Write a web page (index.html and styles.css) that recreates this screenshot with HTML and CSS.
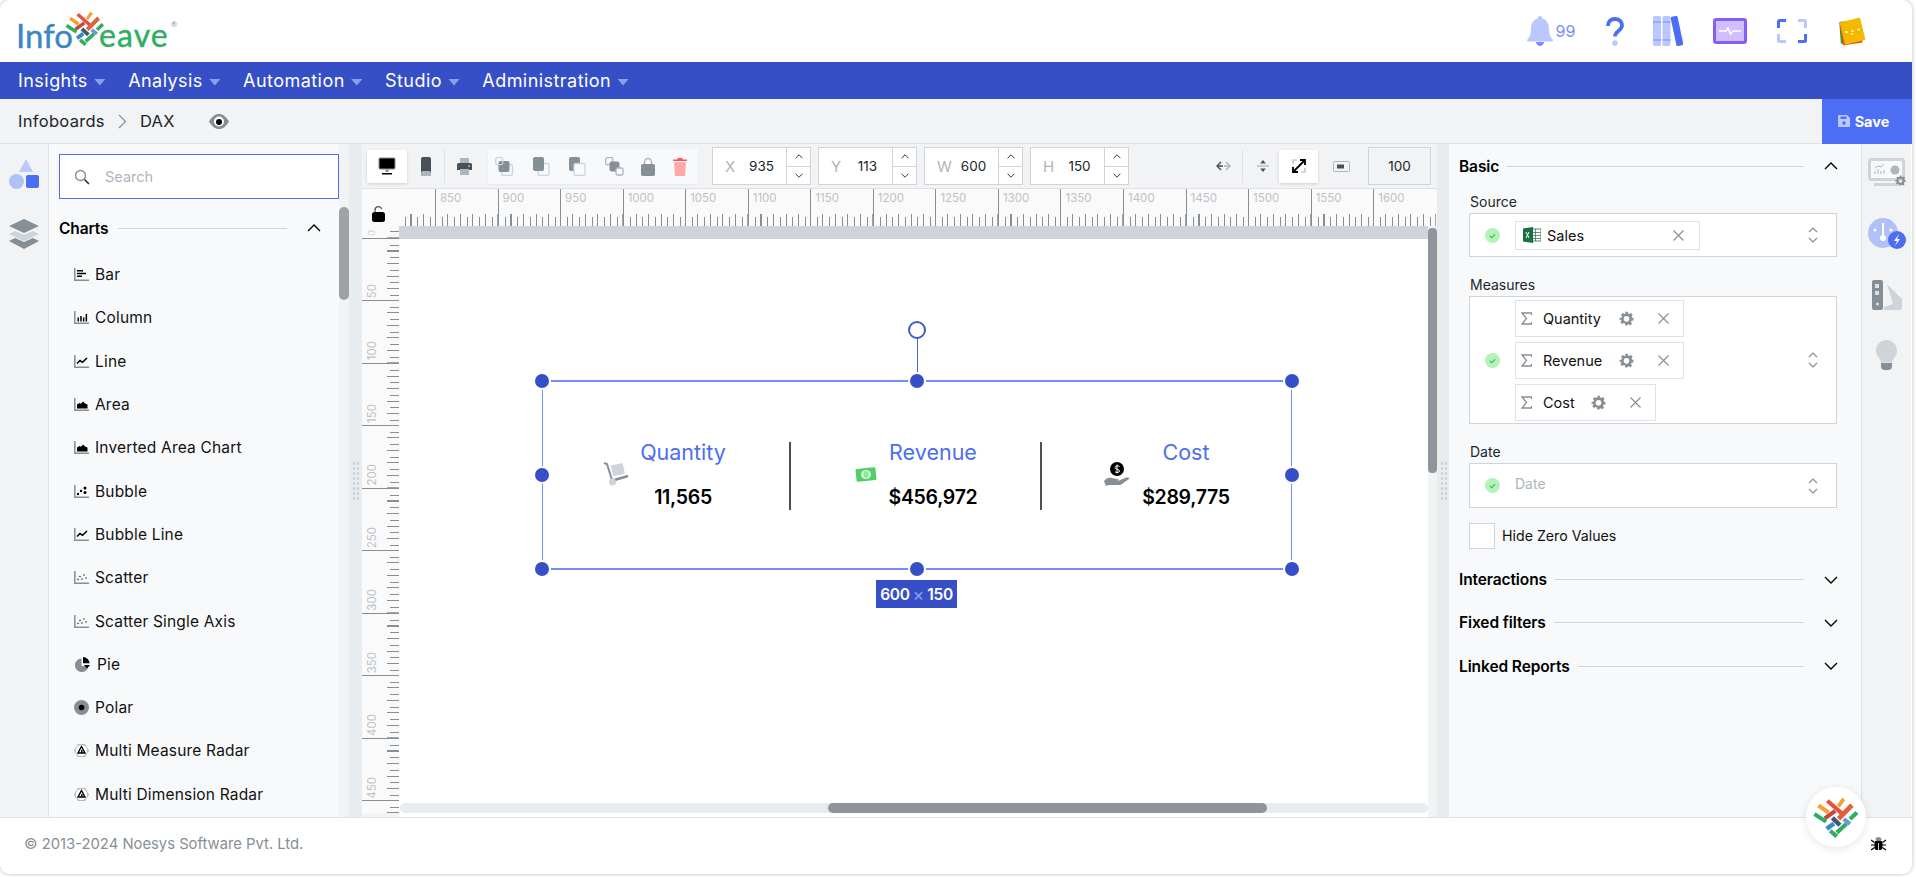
FILE: index.html
```html
<!DOCTYPE html>
<html lang="en">
<head>
<meta charset="utf-8">
<title>Infoweave - DAX</title>
<link rel="stylesheet" href="styles.css">
</head>
<body>
<svg class="defs" width="0" height="0" aria-hidden="true">
  <defs>
    <symbol id="weave" viewBox="335 112 145 130">
      <g fill="none" stroke-width="13">
        <path d="M380 124L426 164" stroke="#e8503f"/>
        <path d="M415 142L432 118" stroke="#f5a030" stroke-width="12"/>
        <path d="M352 139L384 161" stroke="#f5a030"/>
        <path d="M372 180L405 156" stroke="#c9453a"/>
        <path d="M416 181L458 138" stroke="#e0613a" stroke-width="15"/>
        <path d="M396 178L420 201" stroke="#3f5a70" stroke-width="14"/>
        <path d="M378 213L401 196" stroke="#3d86c6" stroke-width="14"/>
        <path d="M432 182L452 197" stroke="#6699d8"/>
        <path d="M339 166L376 190" stroke="#2fae62"/>
        <path d="M389 219L410 237M410 225L441 197M452 182L474 161" stroke="#2fae62"/>
      </g>
    </symbol>
    <symbol id="chev-up" viewBox="0 0 14 8"><path d="M1 7L7 1l6 6" fill="none" stroke="#000" stroke-width="1.400"/></symbol>
    <symbol id="chev-down" viewBox="0 0 14 8"><path d="M1 1l6 6 6-6" fill="none" stroke="#000" stroke-width="1.400"/></symbol>
    <symbol id="updown" viewBox="0 0 10 16"><path d="M1 5l4-4 4 4M1 11l4 4 4-4" fill="none" stroke="#868e96" stroke-width="1.200"/></symbol>
    <symbol id="check" viewBox="0 0 15 15"><circle cx="7.500" cy="7.500" r="7.500" fill="#b2f2bb"/><path d="M4.800 7.800l2 1.800 3.400-3.400" fill="none" stroke="#40c057" stroke-width="1.200"/></symbol>
    <symbol id="close" viewBox="0 0 11 11"><path d="M.5.500l10 10M10.500.5l-10 10" fill="none" stroke="#868e96" stroke-width="1.100"/></symbol>
    <symbol id="sigma" viewBox="0 0 11 13"><path d="M10.500 3V1H1l4.500 5.500L1 12h9.500v-2" fill="none" stroke="#868e96" stroke-width="1.300"/></symbol>
    <symbol id="gear" viewBox="0 0 24 24"><path fill="#868e96" fill-rule="evenodd" d="M10 1h4l.6 3.100 1.900.8 2.600-1.800 2.800 2.800-1.800 2.600.8 1.900L23 11v4l-3.100.6-.8 1.900 1.800 2.600-2.800 2.800-2.600-1.800-1.900.8L13 23h-3l-.6-3.100-1.900-.8-2.600 1.800-2.800-2.800 1.800-2.600-.8-1.900L1 15v-4l3.100-.6.8-1.900-1.800-2.600 2.800-2.800 2.600 1.800 1.900-.8zM12 8a4.500 4.500 0 1 0 0 9 4.500 4.500 0 0 0 0-9z"/></symbol>
    <symbol id="axis" viewBox="0 0 15 13"><path d="M.8 0v12.200H15" fill="none" stroke="#868e96" stroke-width="1.500"/></symbol>
    <symbol id="c-bar" viewBox="0 0 15 13"><use href="#axis"/><path d="M3 2h6v1.500H3zM3 4.700h9v1.500H3zM3 7.400h5v1.500H3z"/></symbol>
    <symbol id="c-col" viewBox="0 0 15 13"><use href="#axis"/><path d="M3.500 6.500H5v4H3.500zM6.200 5H7.700v5.500H6.200zM8.900 6.500h1.500v4H8.900zM11.600 3h1.500v7.500h-1.500z"/></symbol>
    <symbol id="c-line" viewBox="0 0 15 13"><use href="#axis"/><path d="M3 8.500l3-3 2.500 1.800L13 3" fill="none" stroke="#000" stroke-width="1.600"/></symbol>
    <symbol id="c-area" viewBox="0 0 15 13"><use href="#axis"/><path d="M3 10.500V6.500l2.500-1.500 1.500.8L9 3.500l2 2 2.500 1v4z"/></symbol>
    <symbol id="c-bubble" viewBox="0 0 15 13"><use href="#axis"/><circle cx="4" cy="9" r="1.200"/><circle cx="7" cy="6" r="1.200"/><circle cx="11" cy="3" r="1.500"/><circle cx="11" cy="7.500" r="1.500"/></symbol>
    <symbol id="c-scatter" viewBox="0 0 15 13"><use href="#axis"/><circle cx="4" cy="8.500" r=".7"/><circle cx="6" cy="5.500" r=".7"/><circle cx="8" cy="8" r=".7"/><circle cx="10" cy="4" r=".7"/><circle cx="12" cy="7" r=".7"/></symbol>
    <symbol id="c-pie" viewBox="0 0 16 15"><path d="M7 1.500A6.800 6.800 0 1 0 14 9H7z" fill="#868e96"/><path d="M8.500 0a6.800 6.800 0 0 1 6.600 6.200H8.500zM9.500 8h6l-3 3.500z"/></symbol>
    <symbol id="c-polar" viewBox="0 0 15 15"><circle cx="7.500" cy="7.500" r="7.500" fill="#868e96"/><circle cx="7.500" cy="7.500" r="2.800"/></symbol>
    <symbol id="c-radar" viewBox="0 0 15 15"><path d="M4 1h7l4 6.500L11 14H4L0 7.500z" fill="#adb5bd"/><circle cx="7.500" cy="7.500" r="5.800" fill="#fff"/><path d="M7.500 3.500L11 10H4z" fill="none" stroke="#000" stroke-width="1.400"/><path d="M7 7h1.500v3H7z"/></symbol>
    <symbol id="o1" viewBox="0 0 19 19"><rect x="6.500" y="7.500" width="11" height="11" rx="2" fill="none" stroke="#ced4da" stroke-width="1.300"/><rect x="3.500" y="4" width="11" height="11" rx="2" fill="#868e96"/><rect x=".7" y=".7" width="7" height="7" rx="1.500" fill="none" stroke="#ced4da" stroke-width="1.300"/></symbol>
    <symbol id="o2" viewBox="0 0 19 19"><rect x="6" y="6.500" width="11" height="12" rx="2" fill="none" stroke="#ced4da" stroke-width="1.300"/><rect x="1" y="0" width="11" height="14" rx="2" fill="#868e96"/></symbol>
    <symbol id="o3" viewBox="0 0 19 19"><rect x="1" y="0" width="11" height="14" rx="2" fill="#868e96"/><rect x="6" y="6.500" width="11" height="12" rx="2" fill="#f8f9fa" stroke="#ced4da" stroke-width="1.300"/></symbol>
    <symbol id="o4" viewBox="0 0 19 19"><rect x=".7" y=".7" width="7" height="7" rx="1.500" fill="none" stroke="#adb5bd" stroke-width="1.300"/><rect x="4.500" y="4.500" width="10" height="10" rx="2" fill="#868e96"/><rect x="11" y="11" width="7" height="7" rx="1.500" fill="#f8f9fa" stroke="#adb5bd" stroke-width="1.300"/></symbol>
  </defs>
</svg>

<div class="app">
  <header class="topbar">
    <div class="logo">
      <span class="logo-info">Info</span>
      <svg class="logo-mark" width="40" height="35"><use href="#weave"/></svg>
      <span class="logo-eave">eave</span>
      <span class="logo-reg">®</span>
    </div>
    <div class="top-icons">
      <div class="bell">
        <svg width="26" height="30" viewBox="0 0 26 30"><path fill="#bac8ff" d="M13 0c1.500 0 2.500 1 2.500 2.500C20 4 22 8 22 13c0 5 1 8 4 11 0 1-.5 1.500-1.500 1.500h-23C.5 25.500 0 25 0 24c3-3 4-6 4-11C4 8 6 4 10.500 2.500 10.500 1 11.500 0 13 0z"/><path fill="#748ffc" d="M9 26h8c0 2-2 4-4 4s-4-2-4-4z"/></svg>
        <span class="bell-count">99</span>
      </div>
      <svg class="ti-help" width="18" height="29" viewBox="0 0 18 29"><path d="M2 9C2 4 5 2 9 2s7 2.500 7 6.500c0 5-7 5.500-7 11" fill="none" stroke="#4c6ef5" stroke-width="3.800"/><circle cx="9" cy="26" r="2.800" fill="#bac8ff"/></svg>
      <svg class="ti-books" width="30" height="30" viewBox="0 0 30 30"><rect x="0" y="0" width="8" height="30" rx="1.500" fill="#bac8ff"/><rect x="9.500" y="0" width="8" height="30" rx="1.500" fill="#bac8ff"/><path d="M0 6h8M0 24h8M9.500 6h8M9.500 24h8" stroke="#748ffc" stroke-width="1"/><rect x="20.500" y="0" width="7" height="30" rx="1.500" fill="#4c6ef5" transform="rotate(-12 24 15)"/></svg>
      <svg class="ti-monitor" width="34" height="26" viewBox="0 0 34 26"><rect x="1.500" y="1.500" width="31" height="23" rx="1.500" fill="#d0bfff" stroke="#845ef7" stroke-width="3"/><path d="M6 13h7l2-3 2.500 6 2.500-3h8" fill="none" stroke="#fff" stroke-width="1.500"/></svg>
      <svg class="ti-frame" width="30" height="24" viewBox="0 0 30 24"><path d="M1.500 9V2.500a1 1 0 0 1 1-1H9" fill="none" stroke="#4c6ef5" stroke-width="3"/><path d="M21 1.500h6.500a1 1 0 0 1 1 1V9" fill="none" stroke="#bac8ff" stroke-width="3"/><path d="M1.500 15v6.500a1 1 0 0 0 1 1H9" fill="none" stroke="#bac8ff" stroke-width="3"/><path d="M28.500 15v6.500a1 1 0 0 1-1 1H21" fill="none" stroke="#4c6ef5" stroke-width="3"/></svg>
      <svg class="ti-note" width="28" height="30" viewBox="0 0 28 30"><rect x="2" y="5" width="20" height="22" rx="1" fill="#2f9e44" transform="rotate(-4 13 16)"/><rect x="3" y="6" width="20" height="22" rx="1" fill="#e8590c" transform="rotate(-8 13 16)"/><rect x="4" y="3.500" width="21" height="23" rx="1" fill="#f5b800" transform="rotate(-14 15 15)"/><path d="M7 16h3M13 15h3M19 13.500h3M13 18h2" stroke="#fff3bf" stroke-width="1.600"/></svg>
    </div>
  </header>

  <nav class="mainnav">
    <span class="nav-item">Insights<i class="caret"></i></span>
    <span class="nav-item">Analysis<i class="caret"></i></span>
    <span class="nav-item">Automation<i class="caret"></i></span>
    <span class="nav-item">Studio<i class="caret"></i></span>
    <span class="nav-item">Administration<i class="caret"></i></span>
  </nav>

  <div class="crumbs">
    <span>Infoboards</span>
    <svg class="crumb-sep" width="9" height="15" viewBox="0 0 9 15"><path d="M1 1l6.500 6.500L1 14" fill="none" stroke="#868e96" stroke-width="1.100"/></svg>
    <span>DAX</span>
    <svg class="crumb-eye" width="20" height="15" viewBox="0 0 20 15"><path d="M0 7.500C3 2.500 6 0 10 0s7 2.500 10 7.500C17 12.500 14 15 10 15S3 12.500 0 7.500z" fill="#868e96"/><circle cx="10" cy="7.500" r="5" fill="#fff"/><circle cx="10" cy="8" r="3"/></svg>
    <button class="save" type="button">
      <svg width="12" height="12" viewBox="0 0 12 12"><path d="M1 0h8l3 3v8a1 1 0 0 1-1 1H1a1 1 0 0 1-1-1V1a1 1 0 0 1 1-1z" fill="#bac8ff"/><rect x="2.500" y="1.500" width="6" height="2.500" fill="#4c6ef5"/><circle cx="6" cy="8" r="1.800" fill="#4c6ef5"/></svg>
      Save
    </button>
  </div>

  <main class="workspace">
    <aside class="rail">
      <svg class="rail-shapes" width="30" height="30" viewBox="0 0 30 30"><path d="M17 0l7 13H10z" fill="#bac8ff"/><circle cx="7.500" cy="22.500" r="7.500" fill="#b1c1f7"/><rect x="17" y="16" width="13" height="13" rx="2" fill="#4c6ef5"/></svg>
      <svg class="rail-layers" width="30" height="30" viewBox="0 0 30 30"><path d="M0 22l6-3 9 4 9-4 6 3-15 8z" fill="#868e96"/><path d="M0 15l6-3 9 4 9-4 6 3-15 7z" fill="#ced4da"/><path d="M15 0l15 7-15 7L0 7z" fill="#868e96"/></svg>
    </aside>

    <section class="library">
      <div class="library-body">
        <div class="search">
          <svg width="16" height="16" viewBox="0 0 16 16"><circle cx="6.500" cy="6.500" r="5" fill="none" stroke="#868e96" stroke-width="1.400"/><path d="M10.500 10.500L15 15" stroke="#212529" stroke-width="1.500"/></svg>
          <span>Search</span>
        </div>
        <div class="section-head lib-head">
          <span class="section-title">Charts</span>
          <span class="section-line"></span>
          <svg width="14" height="8"><use href="#chev-up"/></svg>
        </div>
        <ul class="chart-list">
          <li><svg width="15" height="13"><use href="#c-bar"/></svg>Bar</li>
          <li><svg width="15" height="13"><use href="#c-col"/></svg>Column</li>
          <li><svg width="15" height="13"><use href="#c-line"/></svg>Line</li>
          <li><svg width="15" height="13"><use href="#c-area"/></svg>Area</li>
          <li><svg width="15" height="13"><use href="#c-area"/></svg>Inverted Area Chart</li>
          <li><svg width="15" height="13"><use href="#c-bubble"/></svg>Bubble</li>
          <li><svg width="15" height="13"><use href="#c-line"/></svg>Bubble Line</li>
          <li><svg width="15" height="13"><use href="#c-scatter"/></svg>Scatter</li>
          <li><svg width="15" height="13"><use href="#c-scatter"/></svg>Scatter Single Axis</li>
          <li class="pie"><svg width="17" height="15"><use href="#c-pie"/></svg>Pie</li>
          <li><svg width="15" height="15"><use href="#c-polar"/></svg>Polar</li>
          <li><svg width="15" height="15"><use href="#c-radar"/></svg>Multi Measure Radar</li>
          <li><svg width="15" height="15"><use href="#c-radar"/></svg>Multi Dimension Radar</li>
        </ul>
      </div>
      <div class="track"><div class="thumb"></div></div>
    </section>

    <div class="gutter"><span class="dots"></span></div>

    <section class="editor">
      <div class="toolbar">
        <div class="tool-card">
          <svg width="18" height="18" viewBox="0 0 18 18"><rect x="1" y="1" width="16" height="11" rx="1" fill="#000" stroke="#868e96"/><path d="M7.500 12.500h3V15h-3z" fill="#868e96"/><path d="M4 16h10v1.500H4z"/></svg>
        </div>
        <svg class="tool-phone" width="10" height="19" viewBox="0 0 10 19"><rect width="10" height="19" rx="2" fill="#495057"/><rect y="14" width="10" height="5" rx="2" fill="#adb5bd"/></svg>
        <span class="tool-sep"></span>
        <svg class="tool-print" width="15" height="17" viewBox="0 0 15 17"><path d="M3 0h9v5H3z" fill="#adb5bd"/><path d="M1.500 5h12A1.500 1.500 0 0 1 15 6.500V12H0V6.500A1.500 1.500 0 0 1 1.500 5z" fill="#495057"/><path d="M3 11h9v6H3z" fill="#adb5bd"/><circle cx="12" cy="8" r=".8" fill="#fff"/></svg>
        <div class="tool-group">
          <svg width="19" height="19"><use href="#o1"/></svg>
          <svg width="19" height="19"><use href="#o2"/></svg>
          <svg width="19" height="19"><use href="#o3"/></svg>
          <svg width="19" height="19"><use href="#o4"/></svg>
          <svg width="14" height="19" viewBox="0 0 14 19"><path d="M3.500 8V5a3.500 3.500 0 0 1 7 0v3" fill="none" stroke="#adb5bd" stroke-width="1.400"/><rect y="7" width="14" height="12" rx="2" fill="#868e96"/></svg>
          <svg width="14" height="19" viewBox="0 0 14 19"><path d="M0 2.500h14V4H0zM4.500 1h5v1.500h-5z" fill="#fa5252"/><path d="M1 5h12l-1 14H2z" fill="#ffa8a8"/></svg>
        </div>
        <div class="num-fields">
          <div class="num"><span class="num-key">X</span><span class="num-val">935</span><span class="spin"><i><svg width="8" height="5"><use href="#chev-up"/></svg></i><i><svg width="8" height="5"><use href="#chev-down"/></svg></i></span></div>
          <div class="num"><span class="num-key">Y</span><span class="num-val">113</span><span class="spin"><i><svg width="8" height="5"><use href="#chev-up"/></svg></i><i><svg width="8" height="5"><use href="#chev-down"/></svg></i></span></div>
          <div class="num"><span class="num-key">W</span><span class="num-val">600</span><span class="spin"><i><svg width="8" height="5"><use href="#chev-up"/></svg></i><i><svg width="8" height="5"><use href="#chev-down"/></svg></i></span></div>
          <div class="num"><span class="num-key">H</span><span class="num-val">150</span><span class="spin"><i><svg width="8" height="5"><use href="#chev-up"/></svg></i><i><svg width="8" height="5"><use href="#chev-down"/></svg></i></span></div>
        </div>
        <svg class="tool-fitw" width="15" height="10" viewBox="0 0 15 10"><path d="M5 1L1 5l4 4M1 5h6" fill="none" stroke="#495057" stroke-width="1.400"/><path d="M10 1l4 4-4 4M14 5H8" fill="none" stroke="#adb5bd" stroke-width="1.400"/></svg>
        <span class="tool-sep sep-b"></span>
        <svg class="tool-fith" width="12" height="14" viewBox="0 0 12 14"><path d="M0 7h12" stroke="#adb5bd" stroke-width="1.200"/><path d="M6 1l2.800 3.500H3.200zM6 13l2.800-3.500H3.200z" fill="#495057"/></svg>
        <div class="tool-card card-b">
          <svg width="14" height="14" viewBox="0 0 14 14"><path d="M8 1h5v5M13 1L1 13M1 8v5h5" fill="none" stroke="#000" stroke-width="1.800"/><path d="M1 5V1h4M13 9v4H9" fill="none" stroke="#adb5bd" stroke-width="1.200"/></svg>
        </div>
        <svg class="tool-label" width="17" height="11" viewBox="0 0 17 11"><rect x=".5" y=".5" width="16" height="10" rx="1" fill="#f1f3f5" stroke="#adb5bd"/><rect x="4" y="3.500" width="7" height="4" fill="#495057"/></svg>
        <div class="zoom-box">100</div>
      </div>

      <div class="ruler-top">
        <div class="ruler-corner">
          <svg width="13" height="16" viewBox="0 0 13 16"><path d="M3 7V4a3.500 3.500 0 0 1 6.800-1" fill="none" stroke="#495057" stroke-width="1.200"/><rect y="6" width="13" height="10" rx="2.500"/></svg>
        </div>
        <div class="rt-lead"></div>
        <div class="rt-cell">850</div><div class="rt-cell">900</div><div class="rt-cell">950</div><div class="rt-cell">1000</div>
        <div class="rt-cell">1050</div><div class="rt-cell">1100</div><div class="rt-cell">1150</div><div class="rt-cell">1200</div>
        <div class="rt-cell">1250</div><div class="rt-cell">1300</div><div class="rt-cell">1350</div><div class="rt-cell">1400</div>
        <div class="rt-cell">1450</div><div class="rt-cell">1500</div><div class="rt-cell">1550</div><div class="rt-cell">1600</div>
      </div>

      <div class="editor-body">
        <div class="ruler-left">
          <div class="rl-cell rl-first"><span>0</span></div>
          <div class="rl-cell"><span>50</span></div>
          <div class="rl-cell"><span>100</span></div>
          <div class="rl-cell"><span>150</span></div>
          <div class="rl-cell"><span>200</span></div>
          <div class="rl-cell"><span>250</span></div>
          <div class="rl-cell"><span>300</span></div>
          <div class="rl-cell"><span>350</span></div>
          <div class="rl-cell"><span>400</span></div>
          <div class="rl-cell"><span>450</span></div>
          <div class="rl-cell"><span></span></div>
        </div>
        <div class="stage">
          <div class="stage-strip"></div>
          <div class="widget">
            <span class="rotate-line"></span>
            <span class="rotate-knob"></span>
            <span class="handle h-tl"></span><span class="handle h-tc"></span><span class="handle h-tr"></span>
            <span class="handle h-ml"></span><span class="handle h-mr"></span>
            <span class="handle h-bl"></span><span class="handle h-bc"></span><span class="handle h-br"></span>
            <span class="size-tag">600 <em>×</em> 150</span>

            <div class="kpi kpi-a">
              <svg class="kpi-icon" width="26" height="24" viewBox="0 0 26 24"><path d="M1 1l3 1 5 16" fill="none" stroke="#868e96" stroke-width="2"/><rect x="9" y="2" width="12" height="11" fill="#ced4da" transform="rotate(-12 15 8)"/><path d="M8 19l17-5" stroke="#868e96" stroke-width="2.500"/><circle cx="9.500" cy="20" r="3.500" fill="#ced4da"/></svg>
              <div class="kpi-text"><span class="kpi-label">Quantity</span><strong class="kpi-value">11,565</strong></div>
            </div>
            <div class="kpi kpi-b">
              <svg class="kpi-icon" width="22" height="17" viewBox="0 0 22 17"><rect x="1" y="2" width="20" height="13" rx="1.500" fill="#51cf66" transform="rotate(-6 11 8.500)"/><ellipse cx="11" cy="8.500" rx="5" ry="4.500" fill="#d3f9d8"/><ellipse cx="11" cy="8.500" rx="2.500" ry="3.500" fill="#8ce99a"/></svg>
              <div class="kpi-text"><span class="kpi-label">Revenue</span><strong class="kpi-value">$456,972</strong></div>
            </div>
            <div class="kpi kpi-c">
              <svg class="kpi-icon" width="26" height="24" viewBox="0 0 26 24"><circle cx="13" cy="7" r="7"/><path d="M15.500 4.500C14.500 3.700 11 3.500 11 5.500s4.500 1.500 4.500 3.500-3.500 1.700-4.500.8M13 2.500v9" fill="none" stroke="#fff" stroke-width="1"/><path d="M0 19c2-3 5-4 8-3l5 1c2 0 2 2 0 2h-3 4l7-3c3-1 5 0 4 1l-7 5c-1 1-3 1-4 1H5l-3 1z" fill="#868e96"/></svg>
              <div class="kpi-text"><span class="kpi-label">Cost</span><strong class="kpi-value">$289,775</strong></div>
            </div>
          </div>
          <div class="vbar"></div>
          <div class="hbar"><div class="hbar-thumb"></div></div>
        </div>
      </div>
    </section>

    <div class="gutter gutter-r"><span class="dots"></span></div>

    <section class="props">
      <div class="section-head">
        <span class="section-title">Basic</span>
        <span class="section-line"></span>
        <svg width="14" height="8"><use href="#chev-up"/></svg>
      </div>

      <div class="field-label fl-source">Source</div>
      <div class="field field-source">
        <svg class="ok" width="15" height="15"><use href="#check"/></svg>
        <div class="chips">
          <div class="chip chip-source">
            <svg width="18" height="16" viewBox="0 0 18 16"><rect x="7" y="2" width="11" height="12" fill="#fff" stroke="#217346" stroke-width=".8"/><path d="M7 5.500h11M7 8.500h11M7 11.500h11M12.500 2v12" stroke="#217346" stroke-width=".7"/><path d="M0 1.500L10 0v16L0 14.500z" fill="#1d6f42"/><path d="M3 5l3 6M6 5l-3 6" stroke="#fff" stroke-width="1"/></svg>
            <span class="chip-text">Sales</span>
            <svg class="chip-x" width="11" height="11"><use href="#close"/></svg>
          </div>
        </div>
        <svg class="updown" width="10" height="16"><use href="#updown"/></svg>
      </div>

      <div class="field-label fl-measures">Measures</div>
      <div class="field field-measures">
        <svg class="ok" width="15" height="15"><use href="#check"/></svg>
        <div class="chips">
          <div class="chip chip-measure"><svg width="11" height="13"><use href="#sigma"/></svg><span class="chip-text">Quantity</span><svg class="gear" width="15" height="15"><use href="#gear"/></svg><svg class="chip-x" width="11" height="11"><use href="#close"/></svg></div>
          <div class="chip chip-measure"><svg width="11" height="13"><use href="#sigma"/></svg><span class="chip-text">Revenue</span><svg class="gear" width="15" height="15"><use href="#gear"/></svg><svg class="chip-x" width="11" height="11"><use href="#close"/></svg></div>
          <div class="chip chip-measure chip-short"><svg width="11" height="13"><use href="#sigma"/></svg><span class="chip-text">Cost</span><svg class="gear" width="15" height="15"><use href="#gear"/></svg><svg class="chip-x" width="11" height="11"><use href="#close"/></svg></div>
        </div>
        <svg class="updown" width="10" height="16"><use href="#updown"/></svg>
      </div>

      <div class="field-label fl-date">Date</div>
      <div class="field field-date">
        <svg class="ok" width="15" height="15"><use href="#check"/></svg>
        <div class="chips"><span class="placeholder">Date</span></div>
        <svg class="updown" width="10" height="16"><use href="#updown"/></svg>
      </div>

      <label class="toggle"><span class="box"></span><span class="toggle-text">Hide Zero Values</span></label>

      <div class="section-head closed first-closed">
        <span class="section-title">Interactions</span><span class="section-line"></span><svg width="14" height="8"><use href="#chev-down"/></svg>
      </div>
      <div class="section-head closed">
        <span class="section-title">Fixed filters</span><span class="section-line"></span><svg width="14" height="8"><use href="#chev-down"/></svg>
      </div>
      <div class="section-head closed">
        <span class="section-title">Linked Reports</span><span class="section-line"></span><svg width="14" height="8"><use href="#chev-down"/></svg>
      </div>
    </section>

    <aside class="rail-right">
      <svg width="38" height="30" viewBox="0 0 38 30"><rect x="1.500" y="1.500" width="34" height="20" rx="2" fill="#f8f9fa" stroke="#ced4da" stroke-width="3"/><path d="M6 25h26v3H6z" fill="#ced4da"/><path d="M7 16v-3M10 16v-5M13 16v-3M16 16v-4M7 10l3-2 3 1 3-3" fill="none" stroke="#adb5bd"/><circle cx="27" cy="12" r="4.500" fill="#adb5bd"/><use href="#gear" x="27" y="17" width="11" height="11"/></svg>
      <svg width="38" height="32" viewBox="0 0 38 32"><circle cx="15" cy="15" r="15" fill="#b1c1f7"/><path d="M15 5v14" stroke="#fff" stroke-width="2"/><circle cx="15" cy="20" r="3" fill="#fff"/><circle cx="7" cy="12" r="1.500" fill="#fff"/><circle cx="23" cy="12" r="1.500" fill="#fff"/><circle cx="29" cy="22" r="9" fill="#4c6ef5"/><path d="M31 16l-5 7h3l-2 5 5-7h-3z" fill="#fff"/></svg>
      <svg width="30" height="30" viewBox="0 0 30 30"><path d="M15 4L30 19v9a2 2 0 0 1-2 2H12v-3l9-3z" fill="#ced4da"/><rect width="11" height="30" rx="2" fill="#868e96"/><rect x="3" y="4" width="4" height="4" fill="#dee2e6"/><rect x="3" y="11" width="4" height="4" fill="#dee2e6"/><circle cx="5.500" cy="24" r="1.500" fill="#dee2e6"/></svg>
      <svg width="21" height="30" viewBox="0 0 21 30"><path d="M10.500 0C16 0 21 4.500 21 10.500c0 4-2 6-4 9-.7 1-1 2-1 3H5c0-1-.3-2-1-3-2-3-4-5-4-9C0 4.500 5 0 10.500 0z" fill="#ced4da"/><path d="M5 23h11v3a4 4 0 0 1-4 4H9a4 4 0 0 1-4-4z" fill="#868e96"/></svg>
    </aside>
  </main>

  <footer class="footer">
    <span>© 2013-2024 Noesys Software Pvt. Ltd.</span>
    <div class="fab"><svg width="46" height="41"><use href="#weave"/></svg></div>
    <svg class="bug" width="15" height="15" viewBox="0 0 15 15"><path d="M4.500 4a3 3 0 0 1 6 0z" fill="#868e96"/><rect x="3.500" y="4.500" width="8" height="9.500" rx="2.500"/><path d="M7.500 7v7" stroke="#fff" stroke-width=".8"/><path d="M0 4l3.500 2.500M15 4l-3.500 2.500M0 9h4M15 9h-4M0 14l3.500-2.500M15 14l-3.500-2.500" stroke="#000" stroke-width="1.200"/></svg>
  </footer>
</div>
</body>
</html>
```

FILE: styles.css
```css
* { box-sizing: border-box; }
html, body { margin: 0; padding: 0; height: 100%; overflow: hidden; background: #fff; }
body { font-family: Inter, "Open Sans", sans-serif; color: #000; }
.defs { position: absolute; }
svg { flex: none; display: block; }

.app {
  width: 1912px; height: 874px; display: flex; flex-direction: column;
  background: #fff; border-radius: 10px; overflow: hidden;
  box-shadow: 0 0 4px rgba(0,0,0,.28);
}

/* top bar */
.topbar { height: 62px; flex: none; display: flex; align-items: center; justify-content: space-between; background: #fff; }
.logo { display: flex; align-items: flex-start; height: 62px; margin-left: 16px; font-family: Lato, sans-serif; }
.logo-info { color: #3d86c6; font-size: 33px; line-height: 36px; margin-top: 17px; width: 48px; -webkit-text-stroke: .4px #3d86c6; }
.logo-mark { margin-top: 11px; margin-left: 1px; }
.logo-eave { color: #2fae62; font-size: 32px; line-height: 36px; margin-top: 17px; margin-left: -6px; letter-spacing: 1.1px; -webkit-text-stroke: .4px #2fae62; }
.logo-reg { color: #868e96; font-size: 8px; margin-top: 19px; margin-left: 2px; }
.top-icons { display: flex; align-items: center; margin-right: 46px; }
.bell { display: flex; align-items: center; width: 48px; }
.bell-count { color: #748ffc; font-size: 16px; margin-left: 3px; }
.ti-help { margin-left: 31px; }
.ti-books { margin-left: 29px; }
.ti-monitor { margin-left: 30px; }
.ti-frame { margin-left: 30px; }
.ti-note { margin-left: 31.5px; }

/* nav */
.mainnav { height: 37px; flex: none; background: #364fc7; display: flex; align-items: center; padding-left: 18px; color: #fff; font-size: 18px; letter-spacing: .45px; }
.nav-item { display: flex; align-items: center; margin-right: 22.3px; white-space: nowrap; }
.caret { width: 12px; height: 7px; margin-left: 6px; margin-top: 3px; background: #8c9eea; clip-path: polygon(0 0, 100% 0, 50% 100%); display: block; }

/* breadcrumbs */
.crumbs { height: 45px; flex: none; background: #f1f3f5; border-bottom: 1px solid #dee2e6; display: flex; align-items: center; padding-left: 18px; font-size: 16.5px; letter-spacing: .3px; color: #212529; }
.crumb-sep { margin: 0 13px 0 13px; }
.crumb-eye { margin-left: 34px; }
.save { margin-left: auto; width: 90px; height: 45px; border: 0; background: #4c6ef5; color: #fff; font: 700 14.5px Inter, sans-serif; display: flex; align-items: center; justify-content: center; gap: 5px; padding: 0 7px 0 0; }

/* workspace */
.workspace { flex: 1; min-height: 0; display: flex; }
.rail { width: 49px; flex: none; background: #f1f3f5; border-right: 1px solid #dee2e6; padding: 15px 0 0 9px; }
.rail-layers { margin-top: 30px; }
.library { width: 300px; flex: none; display: flex; background: #f8f9fa; overflow: hidden; }
.library-body { width: 290px; flex: none; }
.track { width: 10px; flex: none; background: #f1f3f5; padding-top: 63px; }
.thumb { width: 10px; height: 93px; border-radius: 5px; background: #9da2a7; }
.search { margin: 10px 0 0 10px; height: 45px; background: #fff; border: 1.5px solid #4c6ef5; display: flex; align-items: center; padding-left: 14px; gap: 15px; font-size: 14.5px; color: #adb5bd; }
.section-head { display: flex; align-items: center; height: 20px; padding-right: 23px; padding-left: 10px; }
.section-title { font-size: 15.5px; font-weight: 600; white-space: nowrap; letter-spacing: -.1px; }
.section-line { flex: 1; height: 1px; background: #ced4da; margin: 0 20px 0 8px; }
.lib-head { margin-top: 19px; padding-right: 18px; }
.lib-head .section-line { margin-left: 9px; margin-right: 20px; }
.chart-list { list-style: none; margin: 15px 0 0; padding: 0 0 0 25px; }
.chart-list li { height: 43.3px; display: flex; align-items: center; gap: 6px; font-size: 15.5px; letter-spacing: .18px; white-space: nowrap; color: #111; }

.gutter { width: 13px; flex: none; background: #e9ecef; position: relative; }
.gutter-r { width: 12px; }
.dots { position: absolute; left: 3px; top: 317px; width: 7px; height: 40px; background-image: radial-gradient(#ced4da 1.3px, transparent 1.6px); background-size: 4px 5px; }

/* editor */
.editor { width: 1075px; flex: none; display: flex; flex-direction: column; min-height: 0; background: #f1f3f5; }
.toolbar { height: 44px; flex: none; display: flex; align-items: center; padding-left: 5px; }
.tool-card { width: 40px; height: 33px; background: #fff; box-shadow: 0 1px 3px rgba(0,0,0,.15); display: flex; align-items: center; justify-content: center; }
.tool-phone { margin-left: 14px; }
.tool-sep { width: 1px; height: 33px; background: #dee2e6; margin-left: 13px; }
.tool-print { margin-left: 12px; }
.tool-group { width: 210px; height: 35px; margin-left: 16px; background: #f8f9fa; display: flex; align-items: center; justify-content: space-between; padding: 0 11px 0 7px; box-shadow: 0 1px 2px rgba(0,0,0,.05); }
.num-fields { display: flex; gap: 7px; margin-left: 14px; }
.num { width: 99px; height: 38px; background: #fff; border: 1px solid #ced4da; display: flex; align-items: center; font-size: 14px; }
.num-key { width: 24px; padding-left: 12px; color: #adb5bd; font-size: 15px; flex: none; }
.num-val { flex: 1; text-align: center; font-size: 13.5px; color: #212529; }
.spin { width: 24px; height: 100%; flex: none; border-left: 1px solid #ced4da; display: flex; flex-direction: column; }
.spin i { flex: 1; display: flex; align-items: center; justify-content: center; }
.spin i + i { border-top: 1px solid #ced4da; }
.tool-fitw { margin-left: 87px; }
.sep-b { margin-left: 11px; }
.tool-fith { margin-left: 14px; }
.card-b { margin-left: 10px; width: 39px; }
.tool-label { margin-left: 15px; }
.zoom-box { width: 63px; height: 38px; margin-left: 18px; border: 1px solid #ced4da; display: flex; align-items: center; justify-content: center; font-size: 13.5px; color: #212529; }

/* rulers */
.ruler-top { height: 38px; flex: none; display: flex; background: #fafafa; border-top: 1px solid #dee2e6; width: 1075px; }
.ruler-corner { width: 37px; flex: none; padding: 17px 0 0 10px; }
.rt-lead, .rt-cell {
  flex: none;
  background:
    repeating-linear-gradient(90deg, transparent 0 5.75px, #868e96 5.75px 6.75px, transparent 6.75px 12.51px) bottom / 100% 9px no-repeat,
    repeating-linear-gradient(90deg, transparent 0 11.5px, #868e96 11.5px 12.51px) bottom / 100% 12px no-repeat;
}
.rt-lead { width: 36px; }
.rt-cell { width: 62.55px; border-left: 1px solid #868e96; padding: 2px 0 0 4px; font-size: 11.5px; line-height: 15px; color: #bcc2c8; }
.editor-body { flex: 1; min-height: 0; display: flex; }
.ruler-left { width: 37px; flex: none; height: 587px; background: #fafafa; overflow: hidden; }
.rl-cell {
  height: 62.55px; flex: none; border-bottom: 1px solid #868e96; padding: 0 0 2px 4px; display: flex; align-items: flex-end;
  background:
    repeating-linear-gradient(180deg, transparent 0 5.75px, #868e96 5.75px 6.75px, transparent 6.75px 12.51px) right / 9px 100% no-repeat,
    repeating-linear-gradient(180deg, transparent 0 11.5px, #868e96 11.5px 12.51px) right / 12px 100% no-repeat;
}
.rl-first { height: 12.5px; }
.rl-cell span { writing-mode: vertical-rl; transform: rotate(180deg); font-size: 11.5px; line-height: 12px; color: #bcc2c8; }
.rl-first span { color: #ced4da; font-size: 9px; }

.stage { flex: 1; position: relative; background: #fff; overflow: hidden; }
.stage-strip { height: 13px; background: #ced4da; }
.vbar { position: absolute; right: 0; top: 2px; width: 9px; height: 245px; border-radius: 4px; background: #8f959b; z-index: 2; }
.stage::after { content: ""; position: absolute; right: 0; top: 0; bottom: 0; width: 9px; background: #f1f3f5; }
.hbar { position: absolute; left: 1px; right: 9px; bottom: 4px; height: 10px; border-radius: 5px; background: #e9ecef; }
.hbar-thumb { position: absolute; left: 428px; width: 439px; height: 10px; border-radius: 5px; background: #8f959b; }

/* widget */
.widget { position: absolute; left: 143px; top: 154px; width: 750px; height: 190px; display: flex; align-items: center; border: solid #748ffc; border-width: 2px 1px; }
.rotate-line { position: absolute; left: 374px; top: -44px; width: 1px; height: 40px; background: #4263d5; }
.rotate-knob { position: absolute; left: 365px; top: -61px; width: 18px; height: 18px; border-radius: 50%; background: #fff; border: 2px solid #3f5bd0; }
.handle { position: absolute; width: 14px; height: 14px; border-radius: 50%; background: #364fc7; box-shadow: 0 0 0 2px #fff; }
.h-tl, .h-tc, .h-tr { top: -8px; }
.h-bl, .h-bc, .h-br { bottom: -8px; }
.h-ml, .h-mr { top: 86px; }
.h-tl, .h-ml, .h-bl { left: -8px; }
.h-tc, .h-bc { left: 367px; }
.h-tr, .h-mr, .h-br { right: -8px; }
.size-tag { position: absolute; left: 333px; top: 198px; width: 81px; height: 28px; background: #364fc7; color: #fff; font-size: 15.5px; font-weight: 600; display: flex; align-items: center; justify-content: center; gap: 3px; letter-spacing: -.3px; }
.size-tag em { font-style: normal; font-weight: 400; font-size: 18px; color: #8c9eea; }
.kpi { flex: none; height: 68px; margin-top: 2px; display: flex; align-items: center; }
.kpi-a { width: 248px; padding-left: 60px; border-right: 2px solid #495057; }
.kpi-b { width: 251px; padding-left: 62px; border-right: 2px solid #495057; }
.kpi-c { width: 249px; padding-left: 62px; }
.kpi-icon { width: 26px; margin-top: -4px; }
.kpi-text { width: 110px; margin-left: -1px; margin-top: -4px; display: flex; flex-direction: column; align-items: center; gap: 21px; }
.kpi-c .kpi-text { margin-left: 1px; }
.kpi-label { font-size: 21.5px; line-height: 24px; color: #4c6ef5; }
.kpi-value { font-size: 19.5px; line-height: 24px; font-weight: 600; letter-spacing: -.3px; }

/* props */
.props { width: 413px; flex: none; background: #f8f9fa; border-right: 1px solid #dee2e6; padding-top: 12px; }
.field-label { font-size: 14px; line-height: 18px; margin-left: 21px; color: #212529; }
.fl-source { margin-top: 17px; }
.fl-measures { margin-top: 19px; }
.fl-date { margin-top: 19px; }
.field { margin: 2px 0 0 20px; width: 368px; background: #fff; border: 1px solid #ced4da; display: flex; align-items: center; padding-left: 15px; }
.field-source { height: 44px; }
.field-measures { height: 128px; }
.field-date { height: 45px; }
.chips { margin-left: 15px; flex: 1; display: flex; flex-direction: column; gap: 5px; }
.updown { margin-right: 18px; }
.chip { height: 29px; background: #fff; border: 1px solid #dee2e6; display: flex; align-items: center; font-size: 14.5px; color: #111; }
.chip-source { width: 185px; padding-left: 7px; }
.chip-source .chip-text { margin-left: 6px; flex: 1; }
.chip-source .chip-x { margin-right: 15px; }
.chip-measure { width: 169px; height: 37px; padding-left: 5px; }
.chip-measure .chip-text { width: 76px; margin-left: 11px; flex: none; white-space: nowrap; }
.gear { margin-right: 24px; }
.chip-short { width: 141px; }
.chip-short .chip-text { width: 48px; }
.placeholder { font-size: 14px; color: #adb5bd; padding-bottom: 4px; }
.toggle { display: flex; align-items: center; gap: 7px; margin: 15px 0 0 20px; font-size: 14.2px; color: #111; }
.toggle-text { padding-bottom: 2px; }
.box { width: 26px; height: 26px; background: #fff; border: 1px solid #ced4da; }
.closed { margin-top: 23.4px; }
.first-closed { margin-top: 20.5px; }

.rail-right { flex: none; width: 49px; background: #f1f3f5; display: flex; flex-direction: column; align-items: center; padding-top: 14px; gap: 30px; }

/* footer */
.footer { height: 57px; flex: none; position: relative; background: #fff; border-top: 1px solid #dee2e6; display: flex; align-items: center; padding: 0 0 5px 24px; font-size: 14.8px; color: #868e96; }
.fab { position: absolute; left: 1806px; top: -31px; width: 60px; height: 60px; border-radius: 50%; background: #fff; box-shadow: 0 2px 10px rgba(0,0,0,.1); display: flex; align-items: center; justify-content: center; }
.bug { position: absolute; left: 1871px; top: 18px; }
```
